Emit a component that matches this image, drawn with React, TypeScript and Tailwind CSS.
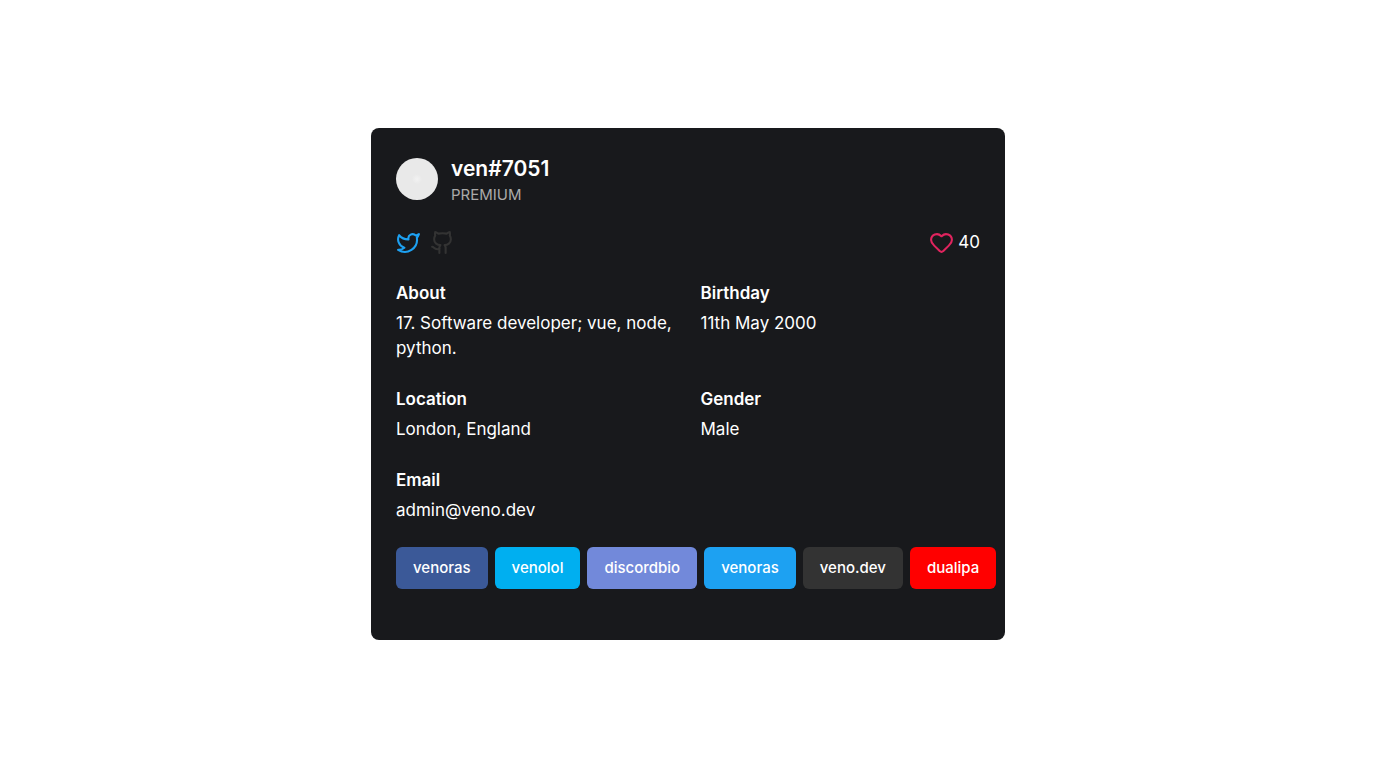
import { Github, Heart, Twitter } from "lucide-react";

const details = [
  { label: "About", value: "17. Software developer; vue, node, python." },
  { label: "Birthday", value: "11th May 2000" },
  { label: "Location", value: "London, England" },
  { label: "Gender", value: "Male" },
  { label: "Email", value: "admin@veno.dev" },
];

const links = [
  { name: "venoras", color: "bg-[#3b5998]" },
  { name: "venolol", color: "bg-[#00aff0]" },
  { name: "discordbio", color: "bg-[#7289da]" },
  { name: "venoras", color: "bg-[#1da1f2]" },
  { name: "veno.dev", color: "bg-[#333333]" },
  { name: "dualipa", color: "bg-[#ff0000]" },
];

export default function App() {
  return (
    <main className="flex min-h-screen items-center justify-center bg-white font-['Inter',sans-serif]">
      <article className="w-full max-w-[634px] rounded-lg bg-[#18191c] px-[25px] pt-[25px] pb-[51px] text-[17px] leading-[25px] text-white">
        <header className="flex items-center gap-[13px]">
          <div className="size-[42px] rounded-full bg-[radial-gradient(circle,#f2f2f2_0,#e9e9e9_5px)]" />
          <div>
            <h1 className="text-[21px] leading-[31px] font-semibold">ven#7051</h1>
            <p className="text-[15px] leading-[21px] text-[#aaaaaa]">PREMIUM</p>
          </div>
        </header>
        <div className="mt-[25px] flex items-center justify-between">
          <nav aria-label="Profiles" className="flex gap-[9px]">
            <a href="#twitter" aria-label="Twitter"><Twitter size={25} color="#1da1f2" /></a>
            <a href="#github" aria-label="GitHub"><Github size={25} color="#333333" /></a>
          </nav>
          <button type="button" aria-label="Like, 40 likes" className="flex items-center gap-1">
            <Heart size={25} color="#e0245e" />
            <span>40</span>
          </button>
        </div>
        <dl className="mt-[26px] grid grid-cols-2 gap-x-[25px] gap-y-[26px]">
          {details.map((item) => (
            <div key={item.label}>
              <dt className="font-semibold">{item.label}</dt>
              <dd className="mt-[5px]">{item.value}</dd>
            </div>
          ))}
        </dl>
        <nav aria-label="Links" className="mt-6 flex gap-[7px]">
          {links.map((link, index) => (
            <a
              key={index}
              href={`#${link.name}`}
              className={`rounded-md px-[17px] py-[10px] text-[15px] leading-[22px] font-medium ${link.color}`}
            >
              {link.name}
            </a>
          ))}
        </nav>
      </article>
    </main>
  );
}
